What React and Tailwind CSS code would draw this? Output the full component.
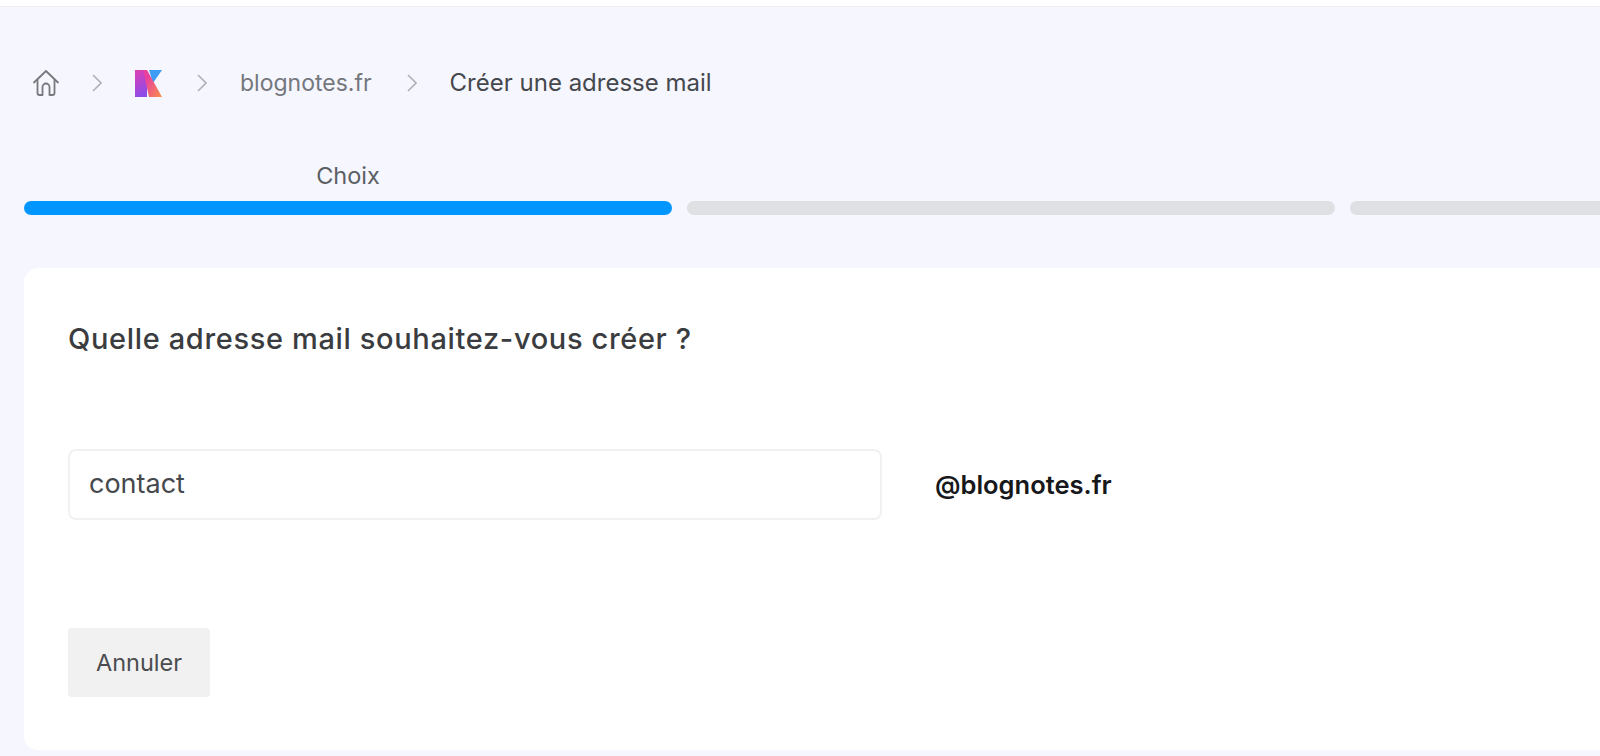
function HomeIcon() {
	return (
		<svg width="28" height="28" viewBox="0 0 28 28" fill="none" stroke="#77797d" strokeWidth="1.8" strokeLinecap="round" strokeLinejoin="round">
			<path d="M2 13.5 14 2l12 11.5" />
			<path d="M5.5 11v13a2 2 0 0 0 2 2h3V18a3.5 3.5 0 0 1 7 0v8h3a2 2 0 0 0 2-2V11" />
		</svg>
	);
}

function KLogo() {
	return (
		<svg width="27" height="27" viewBox="0 0 27 27">
			<defs>
				<linearGradient id="kLeft" x1="0" y1="0" x2="0.3" y2="1">
					<stop offset="0" stopColor="#e03fb0" />
					<stop offset="1" stopColor="#8f4be8" />
				</linearGradient>
				<linearGradient id="kDiag" x1="0" y1="0" x2="1" y2="1">
					<stop offset="0.25" stopColor="#e8409f" />
					<stop offset="1" stopColor="#fa9048" />
				</linearGradient>
			</defs>
			<path d="M14 0H27L18 13Z" fill="#3b9df5" />
			<rect x="0" y="0" width="12" height="27" fill="url(#kLeft)" />
			<path d="M8 0H12L27 27H14Z" fill="url(#kDiag)" />
		</svg>
	);
}

function Separator({ className }) {
	return (
		<svg className={className} width="10" height="18" viewBox="0 0 10 18" fill="none" stroke="#b0b2b6" strokeWidth="1.6">
			<path d="M1 1l8 8-8 8" />
		</svg>
	);
}

const steps = [
	{ label: 'Choix', active: true },
	{ label: '', active: false },
	{ label: '', active: false },
];

export default function App() {
	return (
		<div className="w-[1600px] h-[756px] overflow-hidden bg-[#f5f6fe] font-['Inter',sans-serif] text-[#3f4247]">
			<div className="h-[7px] bg-white border-b border-[#eeeeee]"></div>

			<nav className="flex items-center h-[152px] pl-[32px]">
				<HomeIcon />
				<Separator className="ml-[32px]" />
				<div className="ml-[33px]"><KLogo /></div>
				<Separator className="ml-[35px]" />
				<span className="ml-[33px] text-[23px] text-[#74777c]">blognotes.fr</span>
				<Separator className="ml-[35px]" />
				<span className="ml-[33px] text-[24px] text-[#45484d]">Créer une adresse mail</span>
			</nav>

			<div className="flex gap-[15px] pl-[24px] mt-[4px]">
				{steps.map((step, i) => (
					<div key={i} className="w-[648px] shrink-0">
						<div className="h-[26px] text-center text-[23.5px] leading-[26px] text-[#5b5e63]">{step.label}</div>
						<div className={`mt-[12px] h-[14px] rounded-[7px] ${step.active ? 'bg-[#0096ff]' : 'bg-[#dfe0e3] rounded-[5px]'}`}></div>
					</div>
				))}
			</div>

			<main className="ml-[24px] mt-[53px] h-[482px] rounded-l-[14px] bg-white pl-[44px] pt-[53px]">
				<h1 className="text-[29px] leading-[36px] font-medium text-[#3a3c40] tracking-[0.65px]">Quelle adresse mail souhaitez-vous créer ?</h1>

				<div className="flex items-center mt-[92px]">
					<div className="flex items-center w-[814px] h-[71px] pl-[19px] rounded-[8px] border-2 border-[#f1f1f2] text-[27px] text-[#45484d]">contact</div>
					<span className="ml-[53px] mt-[2px] text-[25.5px] font-semibold text-[#17181b]">@blognotes.fr</span>
				</div>

				<button className="block mt-[108px] w-[142px] h-[69px] rounded-[4px] bg-[#f1f1f1] text-[23.5px] text-[#4a4c50]">Annuler</button>
			</main>
		</div>
	);
}
